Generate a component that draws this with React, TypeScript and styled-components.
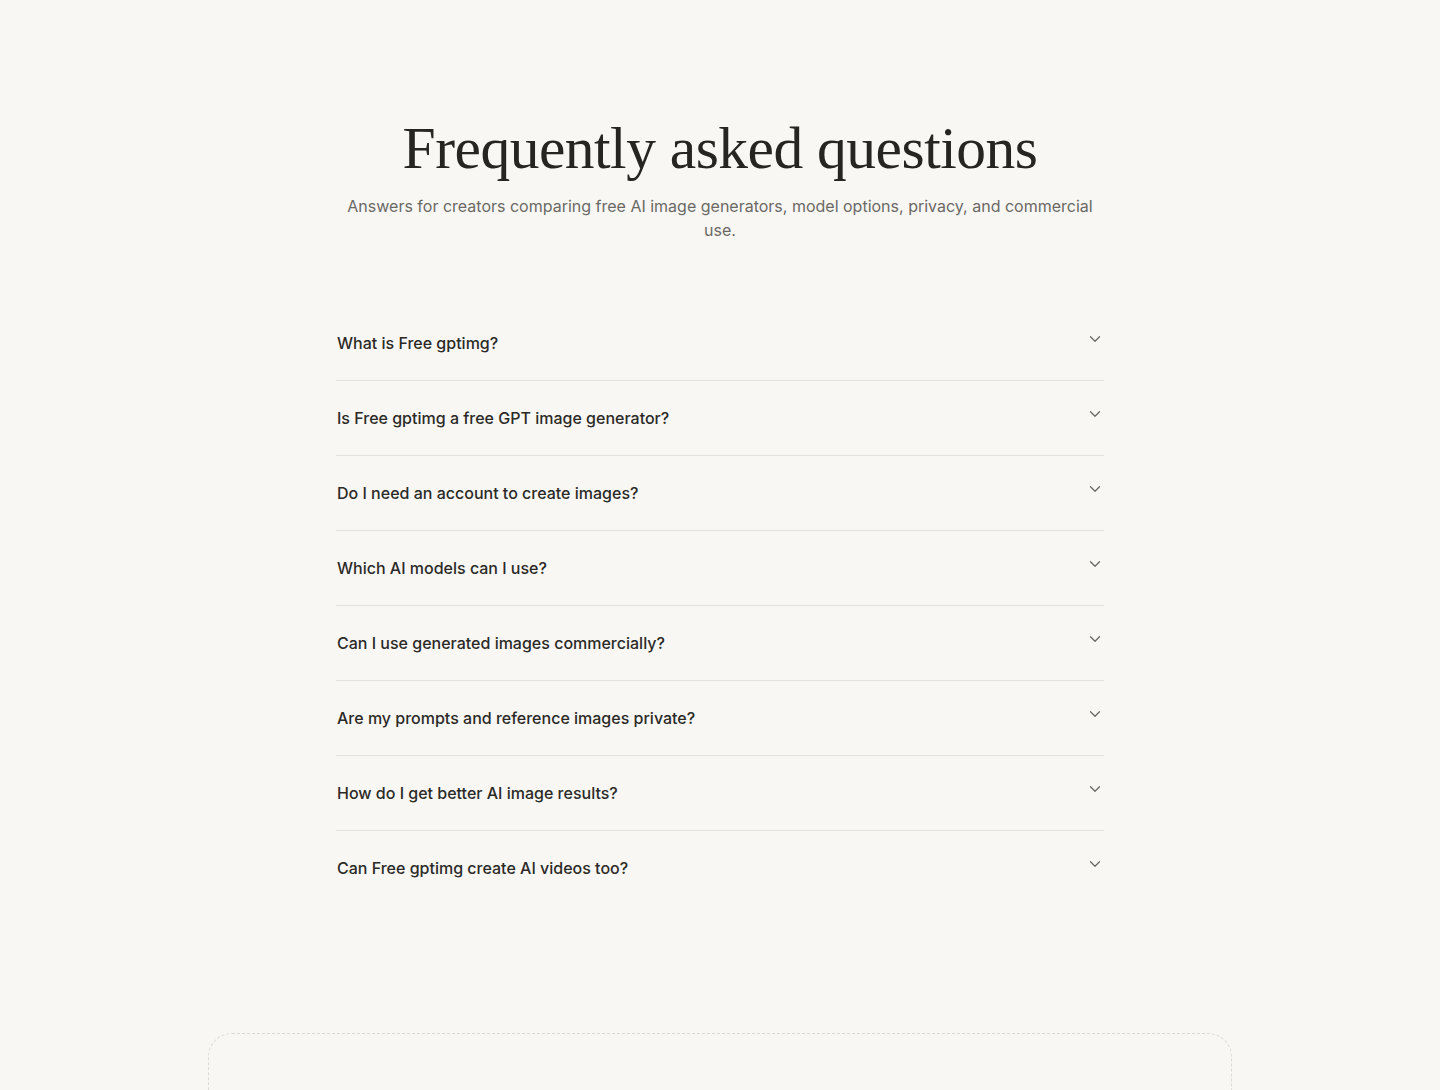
import styled, { createGlobalStyle } from 'styled-components';
import { ChevronDown } from 'lucide-react';

const GlobalStyle = createGlobalStyle`
  html, body {
    margin: 0;
    padding: 0;
    background: #f8f7f4;
  }
  body {
    font-family: Inter, "Noto Sans", sans-serif;
    color: #262522;
  }
`;

const Page = styled.main`
  display: flex;
  flex-direction: column;
  align-items: center;
  padding-top: 112px;
`;

const FaqSection = styled.section`
  width: 768px;
  display: flex;
  flex-direction: column;
`;

const Header = styled.header`
  text-align: center;
  margin-bottom: 64px;
`;

const Title = styled.h2`
  font-family: "Liberation Serif", "DejaVu Serif", serif;
  font-weight: 400;
  font-size: 59.5px;
  line-height: 72px;
  letter-spacing: -0.5px;
  color: #262522;
  margin: 0 0 10px;
`;

const Subtitle = styled.p`
  font-size: 16px;
  line-height: 24px;
  color: #6b6965;
  margin: 0;
`;

const List = styled.div`
  display: flex;
  flex-direction: column;
`;

const Item = styled.div<{ $last?: boolean }>`
  display: flex;
  align-items: flex-start;
  justify-content: space-between;
  padding: 24px 0 24px 1px;
  border-bottom: 1px solid ${p => (p.$last ? 'transparent' : '#e3e1dc')};
  cursor: pointer;
`;

const Question = styled.span`
  font-size: 16px;
  line-height: 26px;
  font-weight: 500;
  color: #2b2a27;
`;

const Chevron = styled(ChevronDown)`
  color: #6b6965;
  flex-shrink: 0;
`;

const Card = styled.div`
  width: 1024px;
  height: 200px;
  margin-top: 127px;
  border: 1px dashed #dcdad5;
  border-radius: 24px;
  box-sizing: border-box;
`;

const questions = [
  'What is Free gptimg?',
  'Is Free gptimg a free GPT image generator?',
  'Do I need an account to create images?',
  'Which AI models can I use?',
  'Can I use generated images commercially?',
  'Are my prompts and reference images private?',
  'How do I get better AI image results?',
  'Can Free gptimg create AI videos too?',
];

export default function App() {
  return (
    <>
      <GlobalStyle />
      <Page>
        <FaqSection>
          <Header>
            <Title>Frequently asked questions</Title>
            <Subtitle>
              Answers for creators comparing free AI image generators, model options, privacy, and commercial use.
            </Subtitle>
          </Header>
          <List>
            {questions.map((q, i) => (
              <Item key={q} $last={i === questions.length - 1}>
                <Question>{q}</Question>
                <Chevron size={18} strokeWidth={1.75} />
              </Item>
            ))}
          </List>
        </FaqSection>
        <Card />
      </Page>
    </>
  );
}
